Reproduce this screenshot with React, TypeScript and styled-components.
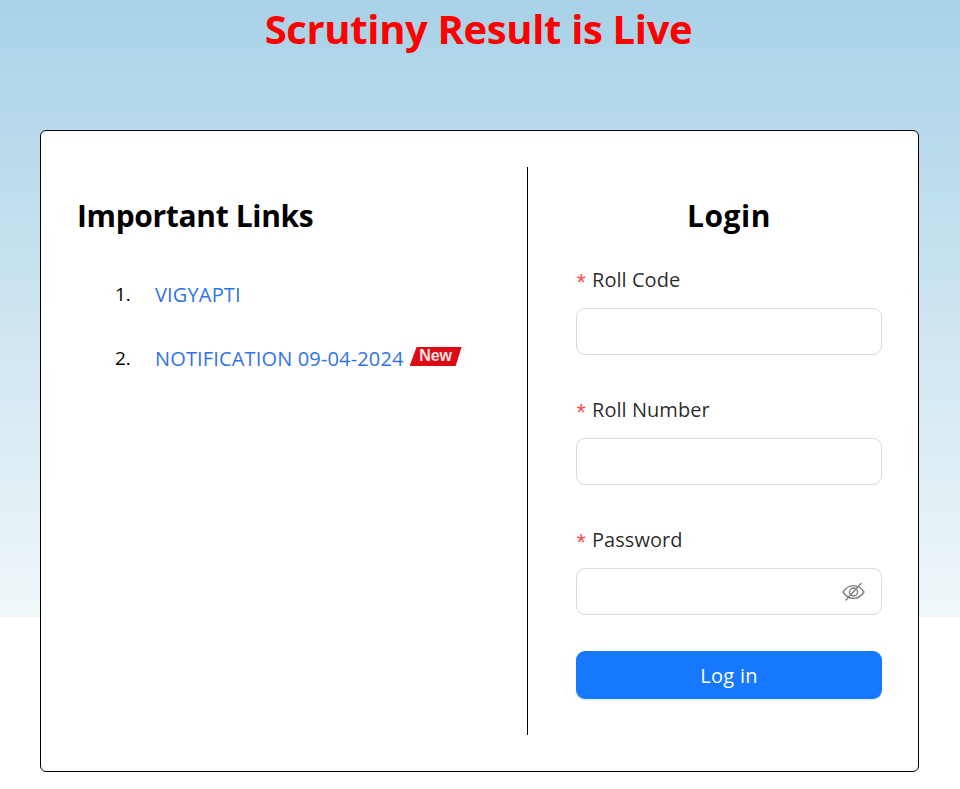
import React from "react";
import styled, { createGlobalStyle } from "styled-components";

const Global = createGlobalStyle`
  html, body { margin: 0; padding: 0; height: 100%; background: #fff; overflow: hidden; }
  body { font-family: "Open Sans", "Noto Sans", "Liberation Sans", sans-serif; }
  * { box-sizing: border-box; }
`;

const Page = styled.div`
  width: 960px;
  height: 789px;
  background: linear-gradient(180deg, #a8d2e8 0%, #f0f7f9 100%) no-repeat;
  background-size: 100% 617px;
  display: flex;
  flex-direction: column;
  align-items: center;
`;

const Title = styled.h1`
  margin: 0;
  height: 130px;
  padding: 3px 3px 0 0;
  font-size: 40px;
  line-height: 52px;
  font-weight: 700;
  color: #ff0000;
  letter-spacing: -0.36px;
  text-align: center;
`;

const Card = styled.main`
  align-self: flex-start;
  margin-left: 40px;
  width: 879px;
  height: 642px;
  background: #fff;
  border: 1px solid #000;
  border-radius: 6px;
  padding: 36px;
  display: grid;
  grid-template-columns: 451px 1fr;
`;

const LinksColumn = styled.section`
  border-right: 1px solid #000;
  padding-top: 28px;
`;

const Heading = styled.h2<{ $center?: boolean }>`
  margin: 0;
  font-size: 30px;
  line-height: 42px;
  font-weight: 700;
  color: #000;
  letter-spacing: ${(p) => (p.$center ? "0.5px" : "-0.35px")};
  text-align: ${(p) => (p.$center ? "center" : "left")};
`;

const LinkList = styled.ol`
  list-style: none;
  margin: 25px 0 0;
  padding: 0 0 0 38px;
`;

const LinkItem = styled.li`
  display: flex;
  align-items: center;
  height: 64px;
  font-size: 20px;
  color: #000;
`;

const Index = styled.span`
  width: 40px;
  font-size: 19px;
  letter-spacing: -0.2px;
`;

const TextLink = styled.a`
  color: #2f74e6;
  text-decoration: none;
  font-size: 20px;
  letter-spacing: 0.15px;
`;

const NewBadge = styled.span`
  margin: -3px 0 0 6px;
  width: 52px;
  height: 19px;
  background: #dc0a14;
  clip-path: polygon(7px 0, 100% 0, 46px 100%, 0 100%);
  color: #fbe3e3;
  font-family: "Liberation Sans", Arial, sans-serif;
  font-size: 16px;
  font-weight: 700;
  line-height: 18px;
  text-align: center;
`;

const LoginColumn = styled.section`
  padding: 28px 0 0 48px;
`;

const Form = styled.form`
  margin-top: 24px;
  display: flex;
  flex-direction: column;
`;

const Field = styled.div`
  height: 130px;
`;

const Label = styled.label`
  display: flex;
  align-items: center;
  height: 36px;
  font-size: 20px;
  letter-spacing: 0.05px;
  color: rgba(0, 0, 0, 0.85);
`;

const Star = styled.span`
  margin: 13px 0 0 -2px;
  width: 18px;
  color: #ff4d4f;
  font-family: "Liberation Mono", monospace;
  font-size: 24px;
  line-height: 24px;
  font-weight: 400;
`;

const InputWrap = styled.div`
  position: relative;
  margin-top: 11px;
`;

const Input = styled.input<{ $withIcon?: boolean }>`
  display: block;
  width: 306px;
  height: 47px;
  border: 1px solid #d9d9d9;
  border-radius: 9px;
  background: #fff;
  outline: none;
  padding: 0 ${(p) => (p.$withIcon ? "44px" : "14px")} 0 14px;
`;

const EyeButton = styled.span`
  position: absolute;
  right: 17px;
  top: 12px;
  width: 24px;
  height: 24px;
  display: block;
  color: #7f7f7f;
`;

const Submit = styled.button`
  width: 306px;
  height: 48px;
  border: 0;
  border-radius: 9px;
  background: #1677ff;
  color: #fff;
  font-family: inherit;
  font-size: 20px;
  letter-spacing: 0.3px;
  box-shadow: 0 2px 0 rgba(5, 145, 255, 0.1);
`;

const EyeOff = () => (
  <svg width="24" height="24" viewBox="0 0 24 24" fill="none" stroke="currentColor" strokeWidth="1.4" strokeLinecap="round" strokeLinejoin="round">
    <path d="M2 12C5 7.5 8.5 5.6 12.5 5.6S20 7.5 23 12c-3 4.5-6.5 6.4-10.500 6.4S5 16.500 2 12Z" />
    <circle cx="12.5" cy="12" r="4" />
    <path d="M20 3.500 5 20" />
  </svg>
);

export default function App() {
  return (
    <Page>
      <Global />
      <Title>Scrutiny Result is Live</Title>
      <Card>
        <LinksColumn>
          <Heading>Important Links</Heading>
          <LinkList>
            <LinkItem>
              <Index>1.</Index>
              <TextLink href="#">VIGYAPTI</TextLink>
            </LinkItem>
            <LinkItem>
              <Index>2.</Index>
              <TextLink href="#">NOTIFICATION 09-04-2024</TextLink>
              <NewBadge>New</NewBadge>
            </LinkItem>
          </LinkList>
        </LinksColumn>
        <LoginColumn>
          <Heading $center>Login</Heading>
          <Form>
            <Field>
              <Label><Star>*</Star>Roll Code</Label>
              <InputWrap><Input type="text" /></InputWrap>
            </Field>
            <Field>
              <Label><Star>*</Star>Roll Number</Label>
              <InputWrap><Input type="text" /></InputWrap>
            </Field>
            <Field>
              <Label><Star>*</Star>Password</Label>
              <InputWrap>
                <Input type="password" $withIcon />
                <EyeButton><EyeOff /></EyeButton>
              </InputWrap>
            </Field>
            <Submit type="button">Log in</Submit>
          </Form>
        </LoginColumn>
      </Card>
    </Page>
  );
}
